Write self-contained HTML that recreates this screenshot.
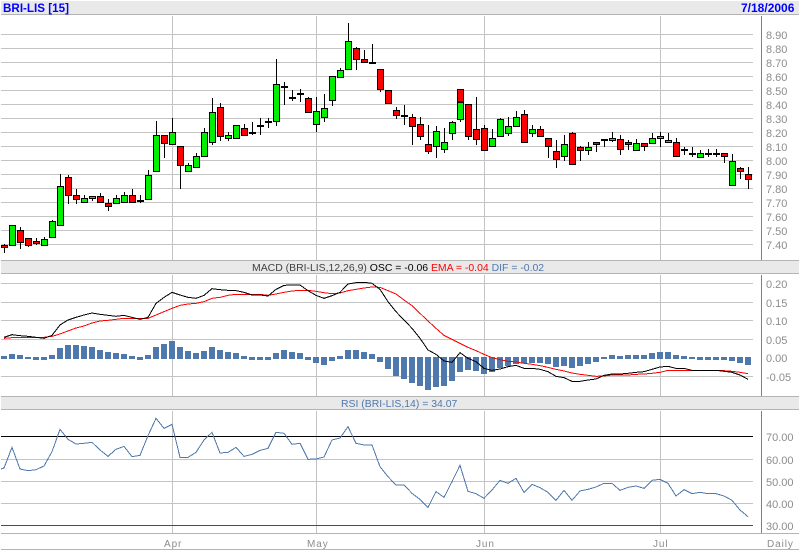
<!DOCTYPE html>
<html><head><meta charset="utf-8"><title>BRI-LIS</title>
<style>html,body{margin:0;padding:0;background:#fff;width:800px;height:550px;overflow:hidden}svg{display:block}
text{font-family:"Liberation Sans",Arial,sans-serif;font-size:11px}
.ax{fill:#8c8c8c}.dt{fill:#8c8c8c;font-size:10px;letter-spacing:.9px}
.hd{fill:#0000ff;font-weight:bold;font-size:12px}
.tt{font-size:10.45px}
.nz{vector-effect:non-scaling-stroke;fill:none}</style></head>
<body>
<svg width="800" height="550" viewBox="0 0 800 550" xmlns="http://www.w3.org/2000/svg">
<rect width="800" height="550" fill="#fff"/>
<g fill="#e9e9e9"><rect x="1" y="1" width="798" height="13"/><rect x="1" y="261" width="798" height="12"/><rect x="1" y="397" width="798" height="12"/></g>
<g shape-rendering="crispEdges" fill="none">
<path stroke="#b4b4b4" d="M1 14.5H799M1 260.5H799M1 273.5H799M1 396.5H799M1 409.5H799M1 533.5H799M1 549.5H799"/>
<path stroke="#c4c4c4" d="M1 34.5H753M1 48.5H753M1 62.5H753M1 76.5H753M1 90.5H753M1 104.5H753M1 118.5H753M1 132.5H753M1 146.5H753M1 160.5H753M1 174.5H753M1 188.5H753M1 202.5H753M1 216.5H753M1 230.5H753M1 244.5H753
M1 283.5H753M1 302.5H753M1 320.5H753M1 339.5H753M1 376.5H753
M1 459.5H753M1 481.5H753M1 503.5H753
M172.5 16V260M316.5 16V260M484.5 16V260M660.5 16V260
M172.5 275V396M316.5 275V396M484.5 275V396M660.5 275V396
M172.5 411V533M316.5 411V533M484.5 411V533M660.5 411V533"/>
<path stroke="#808080" d="M761.5 16V260M761.5 275V396M761.5 411V533"/>
<path stroke="#000" d="M1 436.5H753"/>
<path stroke="#ff0000" d="M1 525.5H753"/>
</g>
<g shape-rendering="crispEdges" fill="none" stroke="#000">
<path d="M4.5 244V253M20.5 227V249M28.5 238V247M36.5 238V245M44.5 237V246M52.5 220V238M60.5 174V226M68.5 175V204M76.5 189V204M84.5 195V203M92.5 196V201M100.5 193V203M108.5 199V211M116.5 195V204M124.5 192V203M132.5 189V203M140.5 195V203M148.5 170V200M156.5 121V172M164.5 135V158M172.5 118V145M180.5 146V189M188.5 163V172M196.5 153V168M204.5 128V157M212.5 98V145M220.5 103V141M228.5 132V141M244.5 124V136M252.5 122V135M260.5 118V135M268.5 118V128M276.5 59V126M284.5 82V105M292.5 90V101M300.5 89V102M308.5 97V113M316.5 97V132M324.5 94V122M332.5 76V106M340.5 68V78M348.5 23V70M356.5 47V70M364.5 50V63M372.5 44V64M380.5 69V92M396.5 107V119M404.5 105V125M412.5 114V145M420.5 117V140M428.5 125V154M436.5 126V158M444.5 128V153M452.5 121V140M460.5 89V122M468.5 104V140M476.5 97V145M484.5 125V151M492.5 129V147M500.5 118V137M508.5 117V136M516.5 111V127M524.5 110V143M532.5 125V137M540.5 126V137M548.5 138V158M556.5 140V168M564.5 135V161M572.5 132V165M580.5 146V161M588.5 142V155M596.5 142V152M604.5 139V147M612.5 132V142M620.5 135V155M628.5 140V150M636.5 139V151M644.5 143V151M652.5 133V144M660.5 132V147M668.5 133V143M676.5 138V157M684.5 147V155M692.5 147V157M700.5 150V158M708.5 149V157M716.5 149V157M724.5 153V163M732.5 154V186M740.5 167V179M748.5 167V189"/>
<path fill="#00f000" d="M9.5 225.5h6v20h-6zM41.5 239.5h6v6h-6zM49.5 221.5h6v16h-6zM57.5 186.5h6v39h-6zM81.5 198.5h6v4h-6zM89.5 196.5h6v2h-6zM113.5 198.5h6v5h-6zM121.5 195.5h6v7h-6zM145.5 175.5h6v24h-6zM153.5 135.5h6v36h-6zM169.5 132.5h6v12h-6zM185.5 165.5h6v6h-6zM193.5 156.5h6v11h-6zM201.5 132.5h6v24h-6zM209.5 112.5h6v30h-6zM225.5 135.5h6v3h-6zM233.5 125.5h6v13h-6zM249.5 132.5h6v1h-6zM257.5 125.5h6v1h-6zM273.5 84.5h6v37h-6zM281.5 86.5h6v1h-6zM313.5 111.5h6v13h-6zM321.5 108.5h6v9h-6zM329.5 76.5h6v24h-6zM337.5 70.5h6v7h-6zM345.5 41.5h6v28h-6zM369.5 62.5h6v1h-6zM433.5 131.5h6v15h-6zM441.5 142.5h6v7h-6zM449.5 122.5h6v11h-6zM457.5 102.5h6v17h-6zM489.5 138.5h6v8h-6zM497.5 119.5h6v17h-6zM505.5 126.5h6v7h-6zM513.5 117.5h6v9h-6zM529.5 129.5h6v4h-6zM561.5 144.5h6v12h-6zM585.5 147.5h6v3h-6zM601.5 139.5h6v1h-6zM609.5 138.5h6v2h-6zM633.5 143.5h6v7h-6zM649.5 138.5h6v5h-6zM657.5 136.5h6v2h-6zM665.5 140.5h6v2h-6zM681.5 149.5h6v1h-6zM697.5 153.5h6v4h-6zM713.5 153.5h6v1h-6zM729.5 161.5h6v24h-6z"/>
<path fill="#ff0000" d="M1.5 245.5h6v2h-6zM17.5 230.5h6v12h-6zM25.5 238.5h6v7h-6zM33.5 241.5h6v2h-6zM65.5 177.5h6v18h-6zM73.5 195.5h6v4h-6zM97.5 196.5h6v6h-6zM105.5 203.5h6v3h-6zM129.5 195.5h6v7h-6zM161.5 135.5h6v8h-6zM177.5 146.5h6v19h-6zM217.5 107.5h6v29h-6zM241.5 128.5h6v7h-6zM297.5 93.5h6v1h-6zM305.5 98.5h6v14h-6zM353.5 48.5h6v11h-6zM361.5 59.5h6v3h-6zM377.5 69.5h6v20h-6zM385.5 90.5h6v13h-6zM393.5 110.5h6v5h-6zM409.5 117.5h6v9h-6zM417.5 124.5h6v12h-6zM425.5 144.5h6v7h-6zM457.5 89.5h6v12h-6zM465.5 104.5h6v32h-6zM473.5 129.5h6v10h-6zM481.5 128.5h6v22h-6zM521.5 114.5h6v28h-6zM537.5 129.5h6v7h-6zM545.5 138.5h6v8h-6zM553.5 151.5h6v8h-6zM569.5 133.5h6v31h-6zM577.5 147.5h6v3h-6zM593.5 142.5h6v2h-6zM617.5 139.5h6v10h-6zM625.5 142.5h6v2h-6zM641.5 143.5h6v3h-6zM673.5 142.5h6v14h-6zM689.5 153.5h6v1h-6zM721.5 153.5h6v3h-6zM737.5 168.5h6v3h-6zM745.5 174.5h6v5h-6z"/>
<path fill="#000" d="M137.5 200.5h6v1h-6zM265.5 121.5h6v1h-6zM289.5 97.5h6v1h-6zM401.5 115.5h6v1h-6zM705.5 153.5h6v1h-6z"/>
</g>
<g transform="translate(0,260) scale(1,0.33333)" shape-rendering="crispEdges">
<path class="nz" stroke="#4f78ad" stroke-width="6" d="M4 288V297M12 282V297M20 285V297M28 291V297M36 291V300M44 291V300M52 285V297M60 264V297M68 255V297M76 255V297M84 258V297M92 261V297M100 270V297M108 276V297M116 279V297M124 282V297M132 288V297M140 291V300M148 285V297M156 261V297M164 252V297M172 243V297M180 261V297M188 273V297M196 279V297M204 273V297M212 261V297M220 270V297M228 276V297M236 279V297M244 288V297M252 291V300M260 291V300M268 291V300M276 279V297M284 270V297M292 276V297M300 279V297M308 291V300M316 291V309M324 291V315M332 291V303M340 288V297M348 270V297M356 270V297M364 276V297M372 282V297M380 291V306M388 291V327M396 291V348M404 291V357M412 291V369M420 291V378M428 291V390M436 291V381M444 291V378M452 291V363M460 291V336M468 291V330M476 291V333M484 291V342M492 291V336M500 291V324M508 291V318M516 291V312M524 291V309M532 291V309M540 291V309M548 291V312M556 291V321M564 291V318M572 291V324M580 291V318M588 291V312M596 291V306M604 291V297M612 285V297M620 288V297M628 285V297M636 285V297M644 285V297M652 279V297M660 276V297M668 276V297M676 285V297M684 288V297M692 291V297M700 291V300M708 291V300M716 291V300M724 291V300M732 291V303M740 291V309M748 291V315"/>
<polyline class="nz" stroke="#ff0000" stroke-width="1" points="4,235 12,233 20,232 28,232 36,232 44,232 52,229 60,222 68,213 76,204 84,198 92,189 100,183 108,181 116,178 124,175 132,175 140,175 148,175 156,165 164,155 172,145 180,136 188,132 196,130 204,125 212,115 220,112 228,106 236,103 244,103 252,103 260,103 268,106 276,102 284,97 292,93 300,91 308,91 316,94 324,98 332,101 340,99 348,92 356,88 364,84 372,81 380,82 388,92 396,102 404,120 412,137 420,160 428,183 436,205 444,226 452,238 460,250 468,262 476,272 484,283 492,293 500,299 508,304 516,306 524,310 532,313 540,317 548,322 556,328 564,333 572,339 580,343 588,346 596,349 604,348 612,345 620,345 628,345 636,343 644,342 652,340 660,337 668,331 676,331 684,331 692,331 700,331 708,331 716,331 724,332 732,334 740,337 748,341"/>
<polyline class="nz" stroke="#000" stroke-width="1" points="4,232 12,224 20,227 28,229 36,232 44,235 52,226 60,195 68,180 76,172 84,165 92,159 100,163 108,166 116,169 124,166 132,172 140,178 148,172 156,130 164,112 172,97 180,105 188,112 196,115 204,106 212,86 220,89 228,91 236,92 244,97 252,105 260,105 268,108 276,88 284,76 292,75 300,75 308,92 316,106 324,115 332,107 340,97 348,72 356,68 364,67 372,70 380,88 388,125 396,155 404,180 412,205 420,235 428,270 436,283 444,303 452,307 460,278 468,295 476,305 484,325 492,331 500,327 508,320 516,316 524,325 532,325 540,328 548,335 556,349 564,353 572,364 580,364 588,360 596,357 604,346 612,342 620,342 628,340 636,337 644,335 652,328 660,321 668,319 676,325 684,325 692,331 700,331 708,331 716,331 724,334 732,337 740,345 748,358"/>
</g>
<g transform="translate(0,395) scale(1,0.33333)" shape-rendering="crispEdges">
<polyline class="nz" stroke="#4f78ad" stroke-width="1" points="1,222 4,219 12,157 20,222 28,227 36,224 44,213 52,170 60,103 68,133 76,147 84,145 92,142 100,165 108,184 116,163 124,154 132,185 140,181 148,122 156,70 164,100 172,88 180,187 188,187 196,172 204,135 212,112 220,174 228,172 236,157 244,184 252,178 260,166 268,160 276,112 284,115 292,148 300,145 308,193 316,192 324,186 332,135 340,129 348,95 356,145 364,150 372,150 380,215 388,245 396,270 404,270 412,295 420,313 428,337 436,290 444,307 452,260 460,211 468,289 476,296 484,310 492,285 500,256 508,265 516,250 524,292 532,268 540,278 548,292 556,316 564,286 572,316 580,288 588,283 596,276 604,265 612,265 620,286 628,277 636,273 644,280 652,256 660,253 668,265 676,303 684,284 692,296 700,292 708,296 716,296 724,303 732,316 740,345 748,365"/>
</g>
<text class="hd" x="3" y="12" textLength="66" lengthAdjust="spacingAndGlyphs">BRI-LIS [15]</text>
<text class="hd" x="741" y="12">7/18/2006</text>
<text class="tt" x="252" y="271" fill="#404040">MACD (BRI-LIS,12,26,9) <tspan fill="#000">OSC = -0.06</tspan> <tspan fill="#ff0000">EMA = -0.04</tspan> <tspan fill="#4f78ad">DIF = -0.02</tspan></text>
<text class="tt" x="341" y="407" fill="#4f78ad">RSI (BRI-LIS,14) = 34.07</text>
<g class="ax">
<text class="ax" x="766" y="39">8.90</text><text class="ax" x="766" y="53">8.80</text><text class="ax" x="766" y="67">8.70</text><text class="ax" x="766" y="81">8.60</text><text class="ax" x="766" y="95">8.50</text><text class="ax" x="766" y="109">8.40</text><text class="ax" x="766" y="123">8.30</text><text class="ax" x="766" y="137">8.20</text><text class="ax" x="766" y="151">8.10</text><text class="ax" x="766" y="165">8.00</text><text class="ax" x="766" y="179">7.90</text><text class="ax" x="766" y="193">7.80</text><text class="ax" x="766" y="207">7.70</text><text class="ax" x="766" y="221">7.60</text><text class="ax" x="766" y="235">7.50</text><text class="ax" x="766" y="249">7.40</text>
<text class="ax" x="766" y="288">0.20</text><text class="ax" x="766" y="307">0.15</text><text class="ax" x="766" y="325">0.10</text><text class="ax" x="766" y="344">0.05</text><text class="ax" x="766" y="362">0.00</text><text class="ax" x="766" y="381">-0.05</text>
<text class="ax" x="766" y="441">70.00</text><text class="ax" x="766" y="464">60.00</text><text class="ax" x="766" y="486">50.00</text><text class="ax" x="766" y="508">40.00</text><text class="ax" x="766" y="530">30.00</text>
</g>
<text class="dt" x="164" y="547">Apr</text><text class="dt" x="307" y="547">May</text><text class="dt" x="476" y="547">Jun</text><text class="dt" x="653" y="547">Jul</text><text class="dt" x="767" y="547">Daily</text>
</svg>
</body></html>
